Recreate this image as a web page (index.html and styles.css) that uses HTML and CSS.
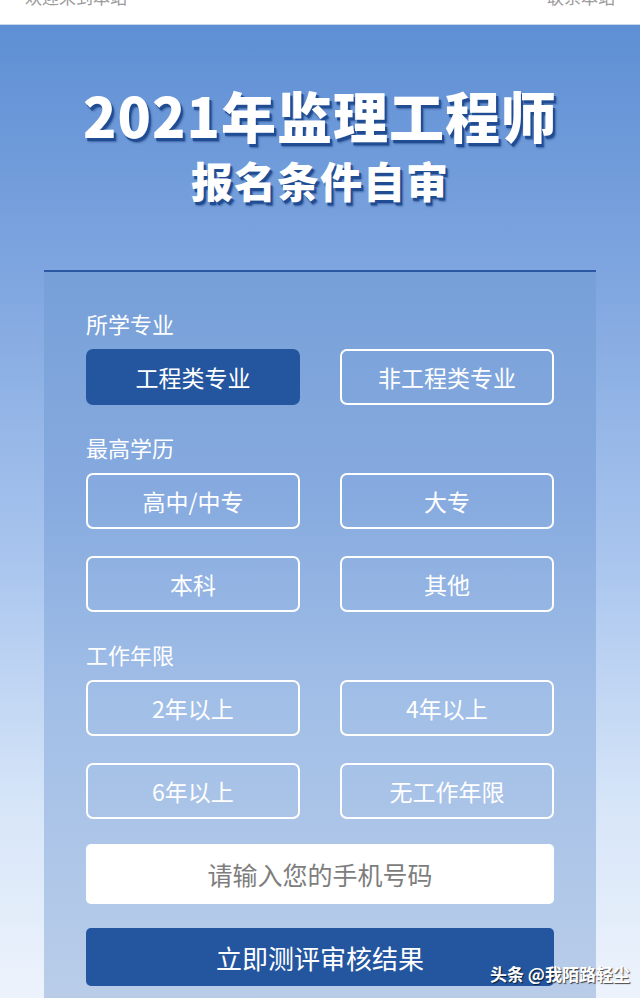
FILE: index.html
```html
<!DOCTYPE html>
<html lang="zh">
<head>
<meta charset="utf-8">
<link rel="stylesheet" href="styles.css">
</head>
<body>
<div class="topbar">
  <span>欢迎来到本站</span>
  <span>联系本站</span>
</div>
<main class="page">
  <header class="hero">
    <h1 class="title">2021年监理工程师</h1>
    <h2 class="subtitle">报名条件自审</h2>
  </header>
  <section class="panel">
    <div class="group">
      <div class="label">所学专业</div>
      <div class="grid">
        <button class="opt active">工程类专业</button>
        <button class="opt">非工程类专业</button>
      </div>
    </div>
    <div class="group">
      <div class="label">最高学历</div>
      <div class="grid">
        <button class="opt">高中/中专</button>
        <button class="opt">大专</button>
        <button class="opt">本科</button>
        <button class="opt">其他</button>
      </div>
    </div>
    <div class="group">
      <div class="label">工作年限</div>
      <div class="grid">
        <button class="opt">2年以上</button>
        <button class="opt">4年以上</button>
        <button class="opt">6年以上</button>
        <button class="opt">无工作年限</button>
      </div>
    </div>
    <div class="phone">请输入您的手机号码</div>
    <button class="submit">立即测评审核结果</button>
  </section>
</main>
<div class="watermark">头条 @我陌路轻尘</div>
</body>
</html>
```

FILE: styles.css
```css
html, body {
  margin: 0;
  padding: 0;
}
body {
  width: 640px;
  height: 998px;
  overflow: hidden;
  position: relative;
  font-family: "Noto Sans CJK SC", "Noto Sans", sans-serif;
  background: #fff;
}
.topbar {
  height: 24px;
  overflow: hidden;
  display: flex;
  justify-content: space-between;
  padding: 0 25px;
  border-bottom: 1px solid #c9d8ee;
}
.topbar span {
  font-size: 17px;
  line-height: 20px;
  color: #9a9a9a;
  margin-top: -13px;
}
.page {
  height: 973px;
  background: linear-gradient(180deg, #5e8fd4 0%, #7ea5df 25%, #a9c5ee 55%, #d6e5f8 80%, #edf3fc 100%);
  display: flex;
  flex-direction: column;
  align-items: center;
}
.hero {
  padding-top: 57px;
  text-align: center;
  color: #fff;
  height: 245px;
  box-sizing: border-box;
}
.title {
  margin: 0;
  font-size: 55px;
  line-height: 64px;
  font-weight: 900;
  letter-spacing: 1px;
  text-shadow: 2px 3px 0 #1f4c93, 3px 4px 2px rgba(20, 50, 110, 0.5);
}
.subtitle {
  margin: 10px 0 0;
  font-size: 42px;
  line-height: 48px;
  font-weight: 900;
  letter-spacing: 1px;
  text-shadow: 2px 3px 0 #1f4c93, 3px 4px 2px rgba(20, 50, 110, 0.5);
}
.panel {
  width: 552px;
  flex: 1;
  box-sizing: border-box;
  border-top: 2px solid #2b58a3;
  background: linear-gradient(180deg, #77a0d8 0%, #86aadf 30%, #a2bfe7 60%, #b9cde9 100%);
  padding: 36px 42px 0;
  display: flex;
  flex-direction: column;
}
.group {
  margin-bottom: 27px;
}
.label {
  font-size: 22px;
  line-height: 30px;
  color: #fff;
  margin-bottom: 11px;
}
.grid {
  display: grid;
  grid-template-columns: 214px 214px;
  column-gap: 40px;
  row-gap: 27px;
}
.opt {
  height: 56px;
  box-sizing: border-box;
  border: 2px solid #fff;
  border-radius: 7px;
  background: transparent;
  color: #fff;
  font-family: inherit;
  font-size: 23px;
  padding: 0;
}
.opt.active {
  background: #2456a0;
  border-color: #2456a0;
}
.phone {
  height: 60px;
  margin-top: -2px;
  background: #fff;
  border-radius: 5px;
  color: #7d7d7d;
  font-size: 25px;
  display: flex;
  align-items: center;
  justify-content: center;
}
.submit {
  margin-top: 24px;
  height: 58px;
  border: none;
  border-radius: 5px;
  background: #2456a0;
  color: #fff;
  font-family: inherit;
  font-size: 26px;
  padding: 0;
}
.watermark {
  position: absolute;
  left: 490px;
  top: 962px;
  font-size: 17px;
  line-height: 24px;
  color: #fff;
  font-weight: 700;
  text-shadow: 1px 1px 1px rgba(0, 0, 0, 0.7);
  white-space: nowrap;
}
```
